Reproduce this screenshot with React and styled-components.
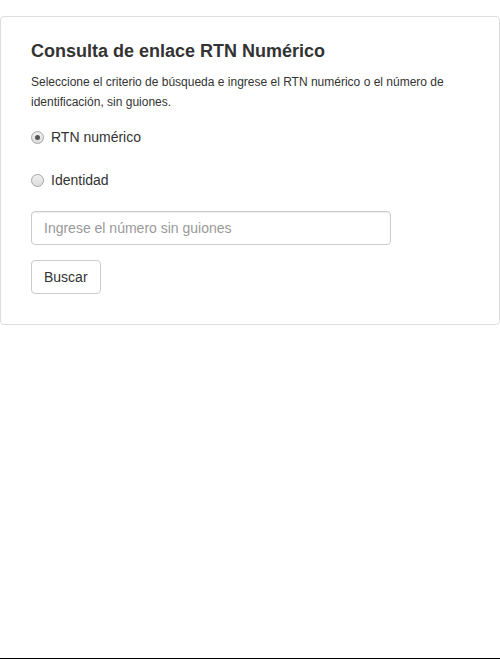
import React, { useState } from "react";
import styled, { createGlobalStyle } from "styled-components";

const GlobalStyle = createGlobalStyle`
  html, body {
    margin: 0;
    padding: 0;
    background: #fff;
  }
  body {
    font-family: "Liberation Sans", Arial, sans-serif;
    color: #333;
  }
`;

const Page = styled.div`
  min-height: 100vh;
  box-sizing: border-box;
  padding-top: 16px;
  border-bottom: 1px solid #000;
`;

const Card = styled.div`
  border: 1px solid #ddd;
  border-radius: 4px;
  padding: 22px 30px 30px;
`;

const Title = styled.h3`
  margin: 0 0 9px;
  font-size: 18px;
  font-weight: bold;
  line-height: 24px;
  color: #333;
`;

const Lead = styled.p`
  margin: 0 0 15px;
  font-size: 12px;
  line-height: 20px;
  color: #333;
`;

const RadioRow = styled.label`
  display: flex;
  align-items: center;
  gap: 7px;
  height: 20px;
  margin-bottom: ${(p) => p.$gap}px;
  font-size: 14px;
  color: #333;
  cursor: pointer;
`;

const RadioDot = styled.span`
  width: 11px;
  height: 11px;
  border-radius: 50%;
  border: 1px solid #a6a6a6;
  background: linear-gradient(#f0f0f0, #dcdcdc);
  display: flex;
  align-items: center;
  justify-content: center;

  &::after {
    content: "";
    width: 5px;
    height: 5px;
    border-radius: 50%;
    background: ${(p) => (p.$checked ? "#555" : "transparent")};
  }
`;

const Input = styled.input`
  display: block;
  box-sizing: border-box;
  width: 360px;
  height: 34px;
  padding: 6px 12px;
  border: 1px solid #ccc;
  border-radius: 4px;
  font-family: inherit;
  font-size: 14px;
  color: #555;
  box-shadow: inset 0 1px 1px rgba(0, 0, 0, 0.075);
  margin-bottom: 15px;

  &::placeholder {
    color: #999;
  }
`;

const Button = styled.button`
  height: 34px;
  padding: 6px 12px;
  border: 1px solid #ccc;
  border-radius: 4px;
  background: #fff;
  font-family: inherit;
  font-size: 14px;
  color: #333;
  cursor: pointer;
`;

export default function App() {
  const [tipo, setTipo] = useState("rtn");

  return (
    <>
      <GlobalStyle />
      <Page>
        <Card>
          <Title>Consulta de enlace RTN Numérico</Title>
          <Lead>
            Seleccione el criterio de búsqueda e ingrese el RTN numérico o el
            número de identificación, sin guiones.
          </Lead>
          <RadioRow $gap={23} onClick={() => setTipo("rtn")}>
            <RadioDot $checked={tipo === "rtn"} />
            RTN numérico
          </RadioRow>
          <RadioRow $gap={21} onClick={() => setTipo("id")}>
            <RadioDot $checked={tipo === "id"} />
            Identidad
          </RadioRow>
          <Input placeholder="Ingrese el número sin guiones" />
          <Button>Buscar</Button>
        </Card>
      </Page>
    </>
  );
}
